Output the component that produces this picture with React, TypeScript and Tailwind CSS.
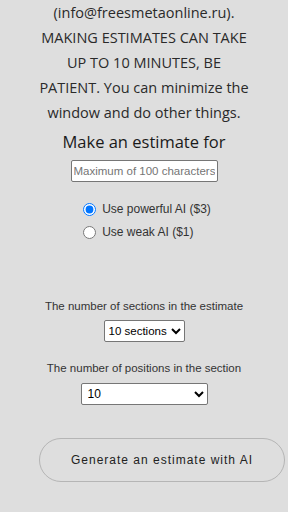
import React from 'react';

export default function App() {
  return (
    <div className="w-[288px] h-[512px] overflow-hidden bg-[#dedede] text-[#222] font-['Open_Sans',sans-serif] flex flex-col items-center">
      <p className="text-center text-[14.5px] leading-[25px] text-[#2a2a2a] w-[240px]">
        (info@freesmetaonline.ru).<br />
        MAKING ESTIMATES CAN TAKE<br />
        UP TO 10 MINUTES, BE<br />
        PATIENT. You can minimize the<br />
        window and do other things.
      </p>

      <h2 className="mt-[4px] text-[16.5px] leading-[26px] text-[#1a1a1a]">Make an estimate for</h2>

      <input
        type="text"
        placeholder="Maximum of 100 characters"
        className="mt-[5px] w-[147px] h-[22px] bg-white border border-[#767676] rounded-[2px] px-[2px] text-[11.5px] font-['Liberation_Sans',Arial,sans-serif] placeholder:text-[#757575] outline-none"
      />

      <div className="mt-[20px] flex flex-col gap-[9px] text-[12px] leading-[14px] text-[#333] font-['Liberation_Sans',Arial,sans-serif] ml-[6px]">
        <label className="flex items-center gap-[6px]">
          <input type="radio" name="ai" defaultChecked className="w-[13px] h-[13px] m-0 accent-[#0075ff]" />
          Use powerful AI ($3)
        </label>
        <label className="flex items-center gap-[6px]">
          <input type="radio" name="ai" className="w-[13px] h-[13px] m-0" />
          Use weak AI ($1)
        </label>
      </div>

      <div className="mt-[59px] flex flex-col items-center font-['Liberation_Sans',Arial,sans-serif] text-[11.5px] text-[#333]">
        <span className="leading-[16px]">The number of sections in the estimate</span>
        <select className="mt-[6px] h-[22px] bg-white border border-[#767676] rounded-[2px] text-[11.5px] text-black px-0" defaultValue="10">
          <option value="10">10 sections</option>
        </select>

        <span className="mt-[18px] leading-[16px]">The number of positions in the section</span>
        <select className="mt-[7px] h-[22px] w-[127px] bg-white border border-[#767676] rounded-[2px] text-[12px] text-black px-[2px]" defaultValue="10">
          <option value="10">10</option>
        </select>
      </div>

      <div className="w-full flex justify-end pr-[3px] mt-[33px]">
        <button className="w-[246px] h-[44px] rounded-full border border-[#b5b5b5] bg-[#dedede] text-[12px] tracking-[1px] text-[#222] font-['Liberation_Sans',Arial,sans-serif]">
          Generate an estimate with AI
        </button>
      </div>
    </div>
  );
}
